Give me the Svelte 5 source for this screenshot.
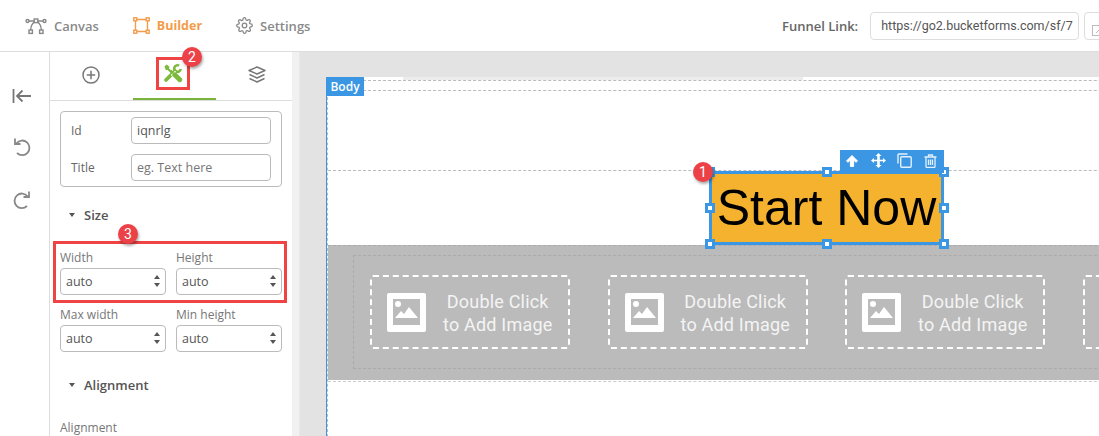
<script>
  const selects = [
    [{ label: 'Width' }, { label: 'Height' }],
    [{ label: 'Max width' }, { label: 'Min height' }]
  ];
  const handles = ['tl', 'tc', 'tr', 'ml', 'mr', 'bl', 'bc', 'br'];
  const placeholders = [1, 2, 3, 4];
</script>

<div class="app">
  <header class="topbar">
    <nav class="nav">
      <span class="nav-item">
        <svg width="22" height="18" viewBox="0 0 22 18" fill="none" stroke="#888" stroke-width="1.4">
          <circle cx="2.500" cy="4" r="1.500" /><circle cx="19.500" cy="4" r="1.500" />
          <rect x="4" y="13" width="3.400" height="3.400" /><rect x="14.600" y="13" width="3.400" height="3.400" />
          <rect x="9.200" y="2" width="3.600" height="3.600" />
          <path d="M4 4h5.200M12.800 4H18M9.400 5C7.400 6.500 5.800 9 5.700 13M12.600 5c2 1.500 3.600 4 3.700 8" />
        </svg>
        Canvas
      </span>
      <span class="nav-item active">
        <svg width="17" height="17" viewBox="0 0 17 17" fill="none" stroke="#f39c4b" stroke-width="1.4">
          <path d="M3 2.500h11M3 14.500h11M2.500 3v11M14.500 3v11" />
          <rect x=".8" y=".8" width="3" height="3" fill="#fff" /><rect x="13.200" y=".8" width="3" height="3" fill="#fff" />
          <rect x=".8" y="13.200" width="3" height="3" fill="#fff" /><rect x="13.200" y="13.200" width="3" height="3" fill="#fff" />
        </svg>
        Builder
      </span>
      <span class="nav-item">
        <svg width="17" height="17" viewBox="0 0 24 24" fill="none" stroke="#888" stroke-width="1.800">
          <circle cx="12" cy="12" r="3.200" />
          <path d="M19.400 15a1.650 1.650 0 0 0 .33 1.820l.06.06a2 2 0 1 1-2.830 2.830l-.06-.06a1.650 1.650 0 0 0-2.800 1.170V21a2 2 0 1 1-4 0v-.09a1.650 1.650 0 0 0-2.800-1.120l-.06.06a2 2 0 1 1-2.830-2.830l.06-.06a1.650 1.650 0 0 0-1.170-2.800H3a2 2 0 1 1 0-4h.09a1.650 1.650 0 0 0 1.120-2.800l-.06-.06a2 2 0 1 1 2.830-2.830l.06.06a1.650 1.650 0 0 0 2.800-1.170V3a2 2 0 1 1 4 0v.09a1.650 1.650 0 0 0 2.800 1.120l.06-.06a2 2 0 1 1 2.830 2.830l-.06.06a1.650 1.650 0 0 0 1.170 2.800H21a2 2 0 1 1 0 4h-.09a1.650 1.650 0 0 0-1.510 1z" />
        </svg>
        Settings
      </span>
    </nav>
    <div class="funnel">
      <span class="funnel-label">Funnel Link:</span>
      <div class="funnel-input">https://go2.bucketforms.com/sf/7</div>
      <div class="funnel-btn">
        <svg width="12" height="12" viewBox="0 0 12 12" fill="none" stroke="#bbb"><rect x=".5" y=".5" width="10" height="10" /><path d="M4 8l5-5" /></svg>
      </div>
    </div>
  </header>

  <div class="workspace">
    <aside class="rail">
      <svg width="20" height="16" viewBox="0 0 20 16" fill="none" stroke="#777" stroke-width="1.800">
        <path d="M1.500 1v14M19 8H5M10.500 2.500L5 8l5.500 5.500" />
      </svg>
      <svg width="20" height="20" viewBox="0 0 20 20" fill="none" stroke="#888" stroke-width="1.800">
        <path d="M4.500 6.200A7.300 7.300 0 1 1 5 16" /><path d="M3 1.500v5.500h5.500" />
      </svg>
      <svg width="20" height="20" viewBox="0 0 20 20" fill="none" stroke="#888" stroke-width="1.800">
        <path d="M15.500 6.200A7.300 7.300 0 1 0 15 16" /><path d="M17 1.500v5.500h-5.500" />
      </svg>
    </aside>

    <section class="panel">
      <div class="tabs">
        <div class="tab plus">
          <svg width="18" height="18" viewBox="0 0 18 18" fill="none" stroke="#777" stroke-width="1.500">
            <circle cx="9" cy="9" r="8" /><path d="M9 4.800v8.400M4.800 9h8.400" />
          </svg>
        </div>
        <div class="tab current">
          <span class="mark">
            <svg width="20" height="20" viewBox="0 0 20 20" fill="none" stroke="#7dba3c">
              <path d="M1.500 3.500l2-2 3 2.200-.6 1.600 5 5-1.400 1.400-5-5-1.600.6z" fill="#7dba3c" stroke="none" />
              <path d="M3 17L12 8" stroke-width="3.800" stroke-linecap="round" />
              <path d="M16.150 2.640A3.300 3.300 0 1 0 17.750 6.070" stroke-width="2.600" />
              <path d="M9.800 9.800l1.200 1.200" stroke="#fff" stroke-width="6" />
              <path d="M11.800 11.800l5 5" stroke-width="4.800" stroke-linecap="round" />
              <path d="M7.500 7.500l2.500 2.500" stroke-width="2.400" />
            </svg>
          </span>
          <span class="badge badge-tab">2</span>
        </div>
        <div class="tab layers">
          <svg width="20" height="20" viewBox="0 0 20 20" fill="none" stroke="#777" stroke-width="1.400" stroke-linejoin="round">
            <path d="M10 2l8 3.500-8 3.500-8-3.500z" /><path d="M2.500 9.500L10 13l7.500-3.500" /><path d="M2.500 13.500L10 17l7.500-3.500" />
          </svg>
        </div>
      </div>

      <div class="panel-body">
        <div class="group">
          <div class="field"><span>Id</span><div class="input">iqnrlg</div></div>
          <div class="field"><span>Title</span><div class="input hint">eg. Text here</div></div>
        </div>

        <h4 class="heading size-heading"><i class="caret"></i>Size</h4>

        <div class="size-grid">
          <span class="badge badge-size">3</span>
          <div class="highlight"></div>
          {#each selects as row}
            {#each row as item}
              <div class="select-field">
                <span class="select-label">{item.label}</span>
                <div class="select">auto<i class="arrows"></i></div>
              </div>
            {/each}
          {/each}
        </div>

        <h4 class="heading align-heading"><i class="caret"></i>Alignment</h4>
        <span class="select-label align-label">Alignment</span>
      </div>
    </section>
    <div class="scrollbar"></div>

    <main class="canvas">
      <div class="page">
        <span class="body-tag">Body</span>
        <div class="strip"></div>
        <div class="row row-a"></div>
        <div class="row row-b"></div>
        <div class="row row-c">
          <div class="button-wrap">
            <span class="badge badge-button">1</span>
            <button class="start">Start Now</button>
            {#each handles as h}
              <i class="handle {h}"></i>
            {/each}
            <div class="toolbar">
              <svg width="14" height="14" viewBox="0 0 14 14" fill="#fff" stroke="#fff" stroke-linejoin="round"><path d="M7 1.500l5.500 5.500-1.500 1.300L8.600 6v6.500H5.400V6L3 8.300 1.500 7z" /></svg>
              <svg width="15" height="15" viewBox="0 0 15 15" fill="#fff"><path d="M7.500 0l3 3H8.800v3.700h3.200V5L15 7.500 12 10V8.300H8.800V12h1.700l-3 3-3-3h1.700V8.300H3V10L0 7.500 3 5v1.700h3.200V3H4.500z" /></svg>
              <svg width="15" height="15" viewBox="0 0 15 15" fill="none" stroke="#e4f0fb" stroke-width="1.400"><path d="M1 10.500V2a1 1 0 0 1 1-1h8.500" /><rect x="3.700" y="3.700" width="10.500" height="10.500" rx="1" /></svg>
              <svg width="13" height="14" viewBox="0 0 13 14" fill="none" stroke="#e4f0fb" stroke-width="1.300"><path d="M.5 3h12M4.500 3V1h4v2" /><path d="M2 3v9.500a1 1 0 0 0 1 1h7a1 1 0 0 0 1-1V3" /><path d="M4.500 5.500v5.500M6.500 5.500v5.500M8.500 5.500v5.500" /></svg>
            </div>
          </div>
        </div>

        <div class="section">
          <div class="section-inner">
            {#each placeholders as p}
              <div class="slot">
                <div class="placeholder">
                  <svg width="39" height="39" viewBox="0 0 39 39">
                    <path fill="#fff" fill-rule="evenodd" d="M2 0h35a2 2 0 0 1 2 2v35a2 2 0 0 1-2 2H2a2 2 0 0 1-2-2V2a2 2 0 0 1 2-2zM6 6v26h27V6z" />
                    <circle cx="11" cy="11" r="3" fill="#fff" />
                    <path fill="#fff" d="M8 25l6-7 3 3 5-7 9 11z" />
                  </svg>
                  <div class="placeholder-text">Double Click<br />to Add Image</div>
                </div>
              </div>
            {/each}
          </div>
        </div>
        <div class="row row-d"></div>
      </div>
    </main>
  </div>
</div>

<style>
  :global(body) {
    margin: 0;
    overflow: hidden;
    background: #fff;
  }

  .app {
    width: 1099px;
    height: 436px;
    overflow: hidden;
    font-family: "Open Sans", sans-serif;
    color: #666;
  }

  .topbar {
    height: 51px;
    display: flex;
    align-items: center;
    justify-content: space-between;
    border-bottom: 1px solid #ddd;
    box-sizing: content-box;
  }

  .nav {
    display: flex;
    align-items: center;
    margin-left: 25px;
    gap: 26px;
  }

  .nav-item {
    display: flex;
    align-items: center;
    gap: 7px;
    font-size: 13px;
    font-weight: 600;
    color: #8a8a8a;
  }

  .nav-item.active {
    color: #f39c4b;
    font-size: 12.500px;
    font-weight: 700;
    margin-left: 8px;
    margin-right: 8px;
  }

  .funnel {
    display: flex;
    align-items: center;
    width: 317px;
    flex: none;
    overflow: hidden;
  }

  .funnel-label {
    font-size: 13px;
    font-weight: 600;
    color: #666;
    margin-right: 12px;
    white-space: nowrap;
  }

  .funnel-input {
    width: 209px;
    height: 28px;
    box-sizing: border-box;
    flex: none;
    border: 1px solid #ddd;
    border-radius: 4px;
    padding-left: 10px;
    font: 12.500px/26px Roboto, sans-serif;
    color: #555;
    white-space: nowrap;
  }

  .funnel-btn {
    flex: none;
    width: 40px;
    height: 28px;
    box-sizing: border-box;
    margin-left: 5px;
    border: 1px solid #ddd;
    border-radius: 4px;
    padding: 7px 0 0 7px;
  }

  .workspace {
    display: flex;
    height: 384px;
  }

  .rail {
    width: 49px;
    flex: none;
    border-right: 1px solid #ddd;
    display: flex;
    flex-direction: column;
    align-items: center;
    gap: 33px;
    padding-top: 36px;
    box-sizing: content-box;
  }

  .rail svg {
    margin-left: -6px;
  }

  .panel {
    width: 242px;
    flex: none;
    background: #fff;
  }

  .scrollbar {
    width: 8px;
    flex: none;
    background: #f1f1f1;
    border-right: 1px solid #e8e8e8;
    box-sizing: border-box;
  }

  .tabs {
    display: grid;
    grid-template-columns: 83px 83px 76px;
    height: 48px;
    border-bottom: 1px solid #ddd;
    box-sizing: content-box;
  }

  .tab {
    position: relative;
    display: flex;
    align-items: center;
    justify-content: center;
    height: 46px;
    margin-bottom: 2px;
  }

  .tab.plus svg {
    margin-right: 2px;
  }

  .tab.layers svg {
    margin-left: 6px;
  }

  .tab.current {
    height: 46px;
    border-bottom: 2px solid #7ab33a;
    margin-bottom: 0;
  }

  .mark {
    display: flex;
    align-items: center;
    justify-content: center;
    width: 28px;
    height: 27px;
    border: 3px solid #ee4444;
    margin: -4px 3px 0 0;
  }

  .badge {
    position: absolute;
    width: 20px;
    height: 20px;
    border-radius: 50%;
    background: #ec4247;
    color: #fff;
    font: 14px/20px Roboto, sans-serif;
    text-align: center;
    box-shadow: 1px 2px 3px rgba(0, 0, 0, .35);
    z-index: 5;
  }

  .badge-tab {
    left: 49px;
    top: -5px;
  }

  .panel-body {
    padding: 10px 10px 0;
    font-size: 12px;
  }

  .group {
    width: 222px;
    height: 76px;
    box-sizing: border-box;
    border: 1px solid #bbb;
    border-radius: 4px;
    padding: 5px 10px;
    display: flex;
    flex-direction: column;
    gap: 10px;
  }

  .field {
    display: flex;
    align-items: center;
    color: #666;
  }

  .field span {
    width: 60px;
  }

  .input {
    width: 140px;
    height: 27px;
    box-sizing: border-box;
    border: 1px solid #bbb;
    border-radius: 4px;
    padding-left: 5px;
    font-size: 12.500px;
    line-height: 25px;
    color: #555;
  }

  .input.hint {
    color: #777;
  }

  .heading {
    margin: 0;
    font-size: 13px;
    font-weight: 600;
    color: #555;
    display: flex;
    align-items: center;
  }

  .size-heading {
    margin: 19px 0 0 9px;
    height: 18px;
  }

  .align-heading {
    margin: 24px 0 0 9px;
    height: 18px;
  }

  .caret {
    width: 0;
    height: 0;
    border-left: 3px solid transparent;
    border-right: 3px solid transparent;
    border-top: 4px solid #555;
    margin-right: 9px;
  }

  .size-grid {
    position: relative;
    display: grid;
    grid-template-columns: 106px 106px;
    gap: 12px 10px;
    margin-top: 26px;
    width: 222px;
  }

  .highlight {
    position: absolute;
    left: -7px;
    top: -9px;
    width: 234px;
    height: 62px;
    box-sizing: border-box;
    border: 3px solid #ee4444;
    pointer-events: none;
  }

  .badge-size {
    left: 58px;
    top: -26px;
  }

  .select-label {
    display: block;
    font-size: 12px;
    line-height: 16px;
    height: 16px;
    color: #777;
  }

  .select {
    position: relative;
    height: 27px;
    box-sizing: border-box;
    border: 1px solid #bbb;
    border-radius: 4px;
    padding-left: 5px;
    margin-top: 2px;
    font-size: 12.500px;
    line-height: 25px;
    color: #555;
  }

  .arrows {
    position: absolute;
    right: 5px;
    top: 6px;
    width: 0;
    height: 0;
    border-left: 3.500px solid transparent;
    border-right: 3.500px solid transparent;
    border-bottom: 4px solid #555;
  }

  .arrows::after {
    content: "";
    position: absolute;
    left: -3.500px;
    top: 8px;
    width: 0;
    height: 0;
    border-left: 3.500px solid transparent;
    border-right: 3.500px solid transparent;
    border-top: 4px solid #555;
  }

  .align-label {
    margin-top: 26px;
  }

  .canvas {
    flex: 1;
    min-width: 0;
    background: #e3e3e3;
    padding: 25px 0 0 27px;
    overflow: hidden;
  }

  .page {
    position: relative;
    width: 1000px;
    background: #fff;
    border-left: 1px dashed #bbb;
    box-shadow: -1px 0 0 #3b97e3;
    box-sizing: border-box;
    height: 360px;
  }

  .body-tag {
    position: absolute;
    left: -2px;
    top: 0;
    width: 38px;
    height: 19px;
    background: #3b97e3;
    color: #fff;
    font: 600 12px/19px "Open Sans", sans-serif;
    text-align: center;
    z-index: 2;
  }

  .strip {
    height: 3px;
    width: 400px;
    margin-left: 75px;
    background: #ececec;
  }

  .row {
    border-top: 1px dashed #bbb;
  }

  .row-a {
    height: 9px;
  }

  .row-b {
    height: 79px;
  }

  .row-c {
    height: 74px;
    display: flex;
    justify-content: center;
  }

  .button-wrap {
    position: relative;
    margin-right: 2px;
    height: 74px;
  }

  .start {
    display: block;
    width: 235px;
    height: 74px;
    box-sizing: border-box;
    padding: 0;
    background: #f5b22f;
    border: 3px solid #3b97e3;
    border-radius: 0;
    color: #000;
    font: 50px/1 "Liberation Sans", sans-serif;
  }

  .toolbar {
    position: absolute;
    right: 0;
    top: -21px;
    width: 104px;
    height: 23px;
    box-sizing: border-box;
    padding: 0 7px 2px 5px;
    background: #3b97e3;
    display: flex;
    align-items: center;
    justify-content: space-between;
  }

  .handle {
    position: absolute;
    width: 4px;
    height: 4px;
    background: #fff;
    border: 3px solid #3b97e3;
  }

  .tl, .tc, .tr { top: -4px; }
  .ml, .mr { top: 32px; }
  .bl, .bc, .br { bottom: -4px; }
  .tl, .ml, .bl { left: -4px; }
  .tc, .bc { left: 113px; }
  .tr, .mr, .br { right: -5px; }

  .badge-button {
    left: -16px;
    top: -9px;
  }

  .section {
    background: #bbb;
    height: 135px;
    box-sizing: border-box;
    padding: 9px 25px 0;
    border-top: 1px dashed #aaa;
  }

  .section-inner {
    display: grid;
    grid-template-columns: repeat(4, 237.500px);
    height: 114px;
    box-sizing: border-box;
    border: 1px dashed #aaa;
    padding-top: 19px;
  }

  .slot {
    padding-left: 16px;
  }

  .placeholder {
    width: 200px;
    height: 74px;
    box-sizing: border-box;
    border: 2px dashed #fff;
    border-radius: 3px;
    display: flex;
    align-items: center;
    gap: 17px;
    padding: 1px 0 0 15px;
    color: #fff;
  }

  .placeholder svg {
    flex: none;
  }

  .placeholder-text {
    font: 400 18px/23px Roboto, sans-serif;
    text-align: center;
    white-space: nowrap;
    letter-spacing: .2px;
    color: #f4f4f4;
  }

  .row-d {
    margin-top: 1px;
    height: 40px;
    border-top-color: #ccc;
  }
</style>
